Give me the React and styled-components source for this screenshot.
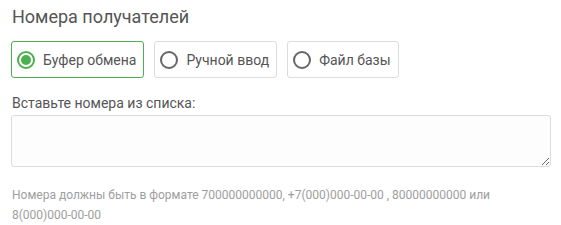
import React, { useState } from 'react';
import styled, { createGlobalStyle } from 'styled-components';

const GlobalStyle = createGlobalStyle`
  body {
    margin: 0;
    background: #fff;
    font-family: Roboto, "Liberation Sans", Arial, sans-serif;
  }
`;

export const Container = styled.div`
  padding: 7px 10px 0 11px;
  color: #555;
`;

export const Heading = styled.h2`
  margin: 0 0 14px 1px;
  font-size: 18px;
  line-height: 20px;
  font-weight: 400;
  color: #555;
`;

export const Options = styled.div`
  display: flex;
  gap: 10px;
`;

export const Option = styled.label`
  box-sizing: border-box;
  height: 37px;
  display: flex;
  align-items: center;
  gap: 8px;
  padding: 0 7px 0 5px;
  border: 1px solid ${(p) => (p.$active ? '#4caf50' : '#dcdcdc')};
  border-radius: 3px;
  font-size: 14px;
  color: #555;
  cursor: pointer;
  background: #fff;

  input {
    display: none;
  }
`;

export const Radio = styled.span`
  box-sizing: border-box;
  width: 18px;
  height: 18px;
  border-radius: 50%;
  border: 2px solid ${(p) => (p.$active ? '#4caf50' : '#666')};
  display: flex;
  align-items: center;
  justify-content: center;
  flex-shrink: 0;

  &::after {
    content: '';
    width: 10px;
    height: 10px;
    border-radius: 50%;
    background: #4caf50;
    display: ${(p) => (p.$active ? 'block' : 'none')};
  }
`;

export const FieldLabel = styled.div`
  margin: 15px 0 2px 1px;
  font-size: 14px;
  line-height: 20px;
  color: #555;
`;

export const Area = styled.textarea`
  display: block;
  box-sizing: border-box;
  width: 100%;
  height: 52px;
  border: 1px solid #dcdcdc;
  border-radius: 3px;
  background: #fdfdfd;
  font-family: inherit;
  font-size: 14px;
  padding: 6px 8px;
  outline: none;
`;

export const Hint = styled.div`
  margin: 18px 0 0 1px;
  font-size: 12px;
  line-height: 20px;
  color: #9e9e9e;
`;

const modes = [
  { id: 'clipboard', title: 'Буфер обмена' },
  { id: 'manual', title: 'Ручной ввод' },
  { id: 'file', title: 'Файл базы' },
];

const App = () => {
  const [mode, setMode] = useState('clipboard');
  return (
    <Container>
      <GlobalStyle />
      <Heading>Номера получателей</Heading>
      <Options>
        {modes.map((m) => (
          <Option key={m.id} $active={mode === m.id}>
            <input
              type="radio"
              name="mode"
              checked={mode === m.id}
              onChange={() => setMode(m.id)}
            />
            <Radio $active={mode === m.id} />
            {m.title}
          </Option>
        ))}
      </Options>
      <FieldLabel>Вставьте номера из списка:</FieldLabel>
      <Area />
      <Hint>
        Номера должны быть в формате 700000000000, +7(000)000-00-00 , 80000000000 или 8(000)000-00-00
      </Hint>
    </Container>
  );
};

export default App;
